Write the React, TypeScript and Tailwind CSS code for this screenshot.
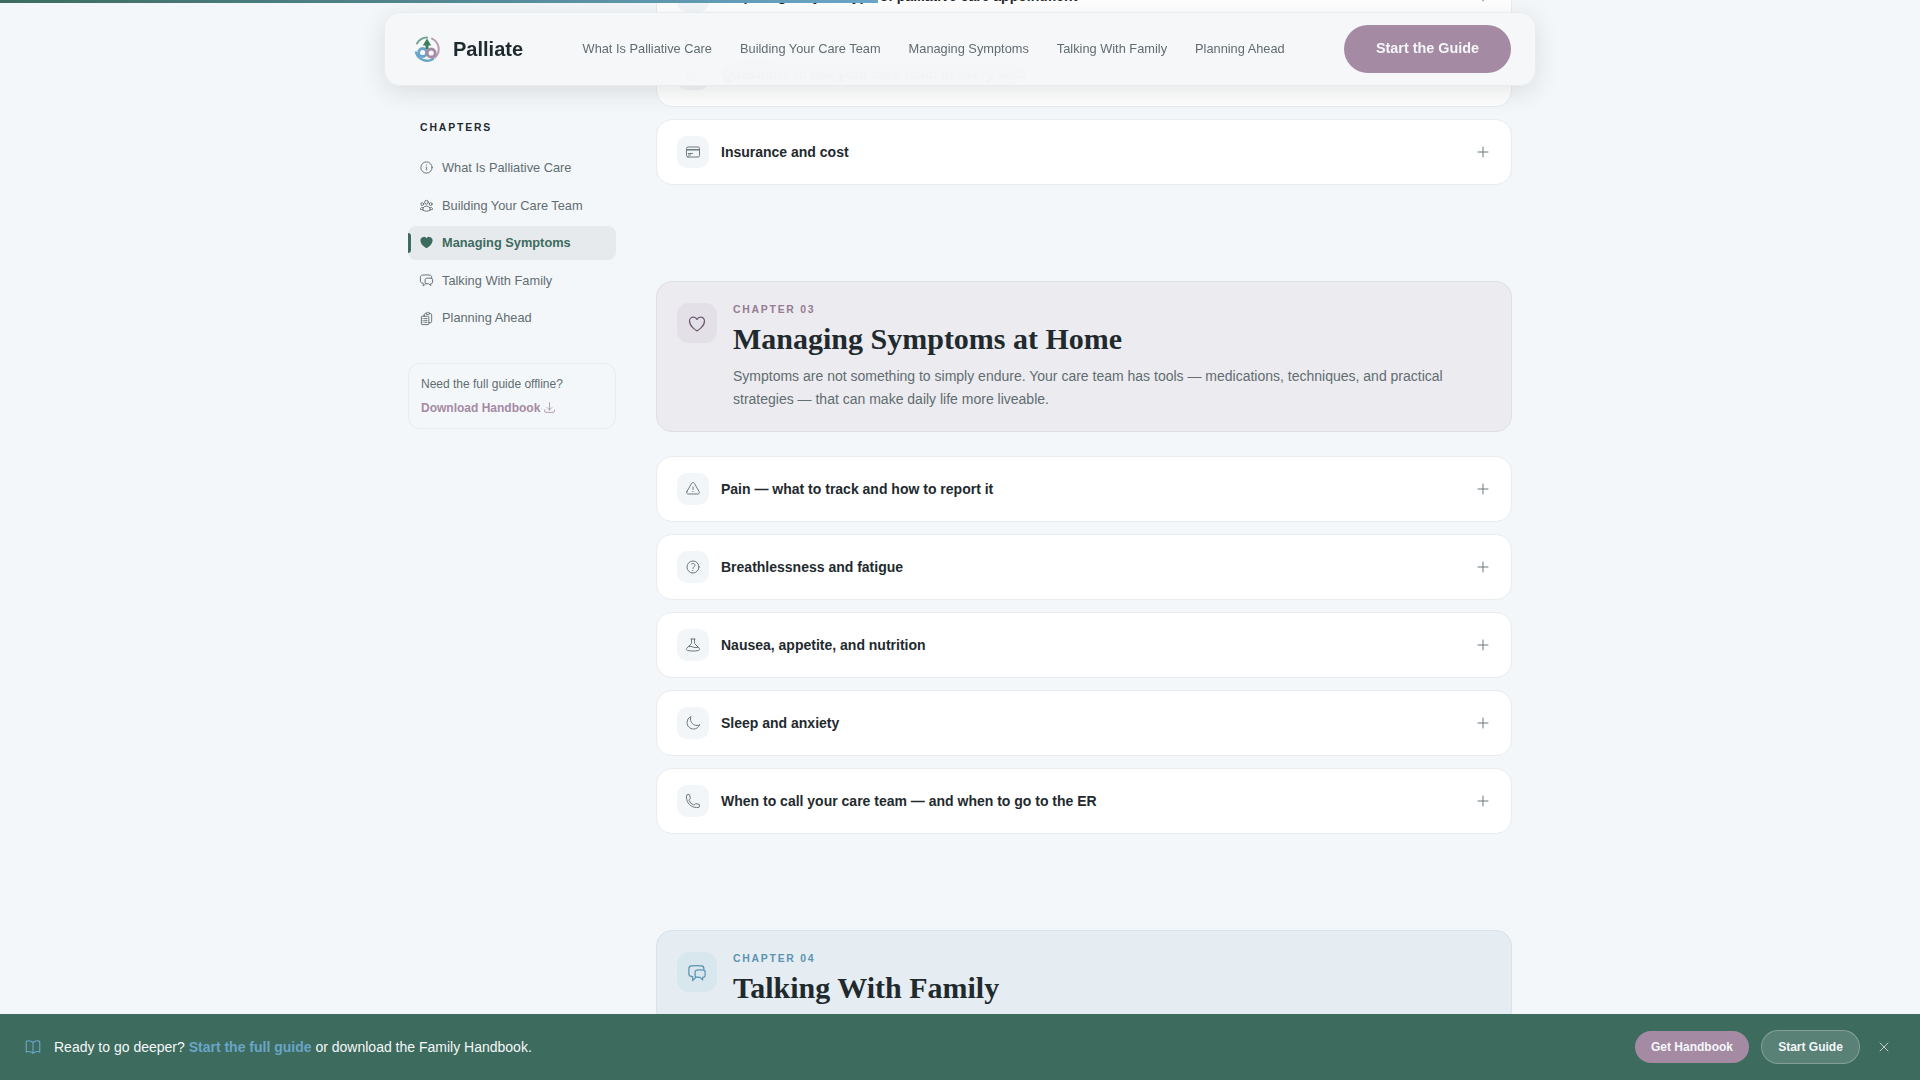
import { useState } from "react"
import type { ComponentType } from "react"
import {
  HiOutlinePlus,
  HiOutlineXMark,
  HiOutlineInformationCircle,
  HiOutlineHeart,
  HiHeart,
  HiOutlineUserGroup,
  HiOutlineMoon,
  HiOutlinePhone,
  HiOutlineBookOpen,
  HiOutlineArrowDownTray,
  HiOutlineCreditCard,
  HiOutlineQuestionMarkCircle,
  HiOutlineBeaker,
  HiOutlineExclamationTriangle,
  HiOutlineChatBubbleLeftRight,
  HiOutlineCalendarDays,
  HiOutlineClipboardDocumentList,
} from "react-icons/hi2"

type Icon = ComponentType<{ size?: number; className?: string }>

const navLinks = [
  "What Is Palliative Care",
  "Building Your Care Team",
  "Managing Symptoms",
  "Talking With Family",
  "Planning Ahead",
]

const chapters: { label: string; icon: Icon }[] = [
  { label: "What Is Palliative Care", icon: HiOutlineInformationCircle },
  { label: "Building Your Care Team", icon: HiOutlineUserGroup },
  { label: "Managing Symptoms", icon: HiHeart },
  { label: "Talking With Family", icon: HiOutlineChatBubbleLeftRight },
  { label: "Planning Ahead", icon: HiOutlineClipboardDocumentList },
]

const symptomTopics: { label: string; icon: Icon }[] = [
  { label: "Pain — what to track and how to report it", icon: HiOutlineExclamationTriangle },
  { label: "Breathlessness and fatigue", icon: HiOutlineQuestionMarkCircle },
  { label: "Nausea, appetite, and nutrition", icon: HiOutlineBeaker },
  { label: "Sleep and anxiety", icon: HiOutlineMoon },
  { label: "When to call your care team — and when to go to the ER", icon: HiOutlinePhone },
]

function Logo() {
  return (
    <svg width="26" height="26" viewBox="0 0 26 26" fill="none" strokeLinecap="round">
      <path d="M3 7.5A11.5 11.5 0 0 1 13 1.5" stroke="#6fa58c" strokeWidth="2" />
      <path d="M18 2.6A11.5 11.5 0 0 1 21 21.5" stroke="#b79cb5" strokeWidth="2" />
      <path d="M19 23A11.5 11.5 0 0 1 2 16.5" stroke="#6aa5c8" strokeWidth="2.4" />
      <circle cx="8.6" cy="16.5" r="4" stroke="#6aa5c8" strokeWidth="2.8" />
      <circle cx="17.2" cy="17" r="4" stroke="#a58aa3" strokeWidth="2.8" />
      <path d="M13 2.5 8.8 9.5h2.7v3.5h3V9.5h2.7z" fill="#3d7d5e" />
    </svg>
  )
}

function TopicCard({ label, icon: Icon }: { label: string; icon: Icon }) {
  return (
    <div className="flex items-center gap-3 rounded-2xl border border-[#e8ecef] bg-white px-5 py-4">
      <div className="flex h-8 w-8 items-center justify-center rounded-[10px] bg-[#f3f6f8]">
        <Icon size={16} className="text-[#6b7a7e]" />
      </div>
      <span className="flex-1 text-[14px] font-bold text-[#1f2a2e]">{label}</span>
      <HiOutlinePlus size={16} className="text-[#6b7a7e]" />
    </div>
  )
}

export default function App() {
  const [bannerOpen, setBannerOpen] = useState(true)

  return (
    <div className="relative h-screen overflow-hidden bg-[#f4f7f9] font-['Liberation_Sans',sans-serif]">
      {/* reading progress */}
      <div className="absolute left-0 top-0 z-30 h-[3px] w-[878px] bg-gradient-to-r from-[#3d6b5e] to-[#6aa5c8]" />

      {/* floating header */}
      <header className="absolute left-[384px] top-[12px] z-20 flex h-[74px] w-[1152px] items-center rounded-2xl border border-[#e8ecef] bg-[#f4f7f9]/95 pl-[29px] pr-6 shadow-[0_6px_24px_rgba(31,42,46,0.12)] [backdrop-filter:blur(14px)]">
        <div className="flex items-center gap-[13px]">
          <Logo />
          <span className="text-[20px] font-bold text-[#1f2a2e]">Palliate</span>
        </div>
        <nav className="ml-[59.5px] flex flex-1 items-center gap-7">
          {navLinks.map((link) => (
            <a key={link} className="text-[12.8px] text-[#616d71]">
              {link}
            </a>
          ))}
        </nav>
        <button className="h-12 w-[167px] rounded-full bg-[#a58aa3] text-[14.4px] font-bold text-[#f4f7f9]">
          Start the Guide
        </button>
      </header>

      <div className="mx-auto flex w-[1152px] gap-10 px-6">
        {/* chapters sidebar */}
        <aside className="w-52 shrink-0 pt-[120px]">
          <div className="mb-[15px] px-3 text-[10.4px] font-bold uppercase leading-4 tracking-[0.18em] text-[#1f2a2e]">
            Chapters
          </div>
          <ul className="space-y-1">
            {chapters.map(({ label, icon: Icon }) => {
              const active = label === "Managing Symptoms"
              return (
                <li
                  key={label}
                  className={
                    active
                      ? "relative flex items-center gap-2 rounded-lg bg-[#e6eaec] px-[11px] py-2 text-[12.8px] font-bold leading-snug text-[#3d6b5e]"
                      : "relative flex items-center gap-2 rounded-lg px-[11px] py-2 text-[12.8px] leading-snug text-[#616d71]"
                  }
                >
                  {active && <span className="absolute left-0 top-[7px] h-5 w-[3px] rounded-r bg-[#3d6b5e]" />}
                  <Icon size={15} />
                  {label}
                </li>
              )
            })}
          </ul>
          <div className="mt-[28px] rounded-xl border border-[#e8ecef] px-3 py-[11px]">
            <p className="text-[12px] leading-[18px] text-[#616d71]">Need the full guide offline?</p>
            <a className="mt-[6px] flex items-center gap-[3px] text-[12px] font-bold leading-[18px] text-[#a58aa3]">
              Download Handbook
              <HiOutlineArrowDownTray size={13} />
            </a>
          </div>
        </aside>

        {/* guide content, scrolled */}
        <main className="-mt-[37px] w-[856px] shrink-0">
          <div className="space-y-3">
            <TopicCard label="Preparing for your type of palliative care appointment" icon={HiOutlineCalendarDays} />
            <TopicCard label="Questions to ask your care team at every visit" icon={HiOutlineClipboardDocumentList} />
            <TopicCard label="Insurance and cost" icon={HiOutlineCreditCard} />
          </div>

          <section className="mt-24">
            <div className="flex gap-4 rounded-2xl border border-[#dcdfe4] bg-[#ecebef] px-5 pb-[20px] pt-[20px]">
              <div className="mt-[1px] flex h-10 w-10 shrink-0 items-center justify-center rounded-xl bg-[#e3e1e7] pt-[1px]">
                <HiOutlineHeart size={20} className="text-[#6f5a70]" />
              </div>
              <div>
                <div className="text-[10.4px] font-bold uppercase leading-4 tracking-[0.17em] text-[#957b93]">
                  Chapter 03
                </div>
                <h2 className="mt-[3px] font-['Liberation_Serif',serif] text-[30px] font-bold leading-[36px] text-[#1f2a2e]">
                  Managing Symptoms at Home
                </h2>
                <p className="mt-[8px] text-[14px] leading-[23px] text-[#616d71]">
                  Symptoms are not something to simply endure. Your care team has tools — medications, techniques, and
                  practical strategies — that can make daily life more liveable.
                </p>
              </div>
            </div>
            <div className="mt-6 space-y-3">
              {symptomTopics.map((topic) => (
                <TopicCard key={topic.label} {...topic} />
              ))}
            </div>
          </section>

          <section className="mt-24">
            <div className="flex gap-4 rounded-2xl border border-[#d8e2ea] bg-[#e5edf2] px-5 pb-[20px] pt-[20px]">
              <div className="mt-[1px] flex h-10 w-10 shrink-0 items-center justify-center rounded-xl bg-[#d8e6ee] pt-[1px]">
                <HiOutlineChatBubbleLeftRight size={20} className="text-[#5b93b3]" />
              </div>
              <div>
                <div className="text-[10.4px] font-bold uppercase leading-4 tracking-[0.17em] text-[#5b93b3]">
                  Chapter 04
                </div>
                <h2 className="mt-[3px] font-['Liberation_Serif',serif] text-[30px] font-bold leading-[36px] text-[#1f2a2e]">
                  Talking With Family
                </h2>
              </div>
            </div>
          </section>
        </main>
      </div>

      {/* handbook banner */}
      {bannerOpen && (
        <div className="absolute inset-x-0 bottom-0 z-20 flex h-[66px] items-center bg-[#3d6b5e] px-6">
          <HiOutlineBookOpen size={18} className="text-[#6aa5c8]" />
          <p className="ml-3 flex-1 text-[14px] text-[#f4f7f9]">
            Ready to go deeper? <span className="font-bold text-[#6aa5c8]">Start the full guide</span> or download the
            Family Handbook.
          </p>
          <button className="h-8 w-[114px] rounded-full bg-[#a58aa3] text-[12px] font-bold text-[#f4f7f9]">
            Get Handbook
          </button>
          <button className="ml-3 h-[34px] w-[99px] rounded-full border border-white/25 bg-white/15 text-[12px] font-bold text-[#f4f7f9]">
            Start Guide
          </button>
          <button onClick={() => setBannerOpen(false)} className="ml-3 p-1 text-[#f4f7f9]/70">
            <HiOutlineXMark size={16} />
          </button>
        </div>
      )}
    </div>
  )
}
